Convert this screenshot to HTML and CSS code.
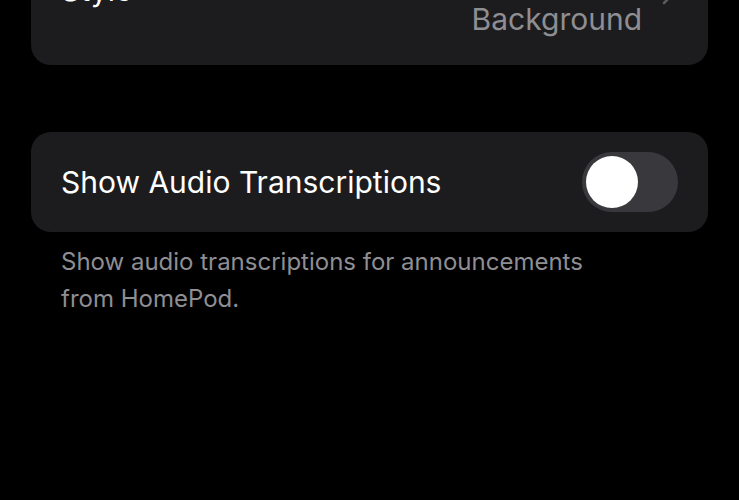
FILE: index.html
```html
<!DOCTYPE html>
<html>
<head>
<meta charset="utf-8">
<link rel="stylesheet" href="styles.css">
</head>
<body>
<div class="page">
  <div class="card card-top">
    <div class="row-style">
      <span class="label">Style</span>
      <div class="value-wrap">
        <span class="value">Background</span>
        <svg class="chevron" width="14" height="24" viewBox="0 0 14 24"><path d="M2 2 L12 12 L2 22" fill="none" stroke="#5a5a5f" stroke-width="2.5" stroke-linecap="round" stroke-linejoin="round"/></svg>
      </div>
    </div>
  </div>

  <div class="card card-toggle">
    <span class="label">Show Audio Transcriptions</span>
    <div class="switch"><div class="knob"></div></div>
  </div>
  <p class="footer">Show audio transcriptions for announcements<br>from HomePod.</p>
</div>
</body>
</html>
```
FILE: styles.css
```css
html, body {
  margin: 0;
  padding: 0;
  background: #000;
}
body {
  font-family: Inter, Roboto, "Liberation Sans", sans-serif;
  -webkit-font-smoothing: antialiased;
}
.page {
  padding: 0 31px;
}
.card {
  background: #1c1c1e;
  border-radius: 20px;
  box-sizing: border-box;
}
.card-top {
  margin-top: -60px;
  height: 125px;
  padding: 0 30px;
}
.row-style {
  display: flex;
  justify-content: space-between;
  align-items: flex-start;
  height: 100%;
}
.label {
  color: #fff;
  font-size: 30px;
  line-height: 36px;
}
.row-style .label {
  margin-top: 32px;
}
.value-wrap {
  display: flex;
  align-items: flex-start;
  gap: 20px;
  margin-top: 61px;
}
.value {
  color: #8e8e93;
  font-size: 30px;
  line-height: 36px;
}
.chevron {
  margin-top: -20px;
  margin-right: 2px;
}
.card-toggle {
  margin-top: 67px;
  height: 100px;
  padding: 0 30px;
  display: flex;
  align-items: center;
  justify-content: space-between;
}
.switch {
  width: 96px;
  height: 60px;
  border-radius: 30px;
  background: #39393d;
  box-sizing: border-box;
  padding: 4px;
  display: flex;
  align-items: center;
}
.knob {
  width: 52px;
  height: 52px;
  border-radius: 50%;
  background: #fff;
}
.footer {
  margin: 11px 0 0;
  padding: 0 30px;
  color: #8e8e93;
  font-size: 24px;
  line-height: 37px;
}
```
